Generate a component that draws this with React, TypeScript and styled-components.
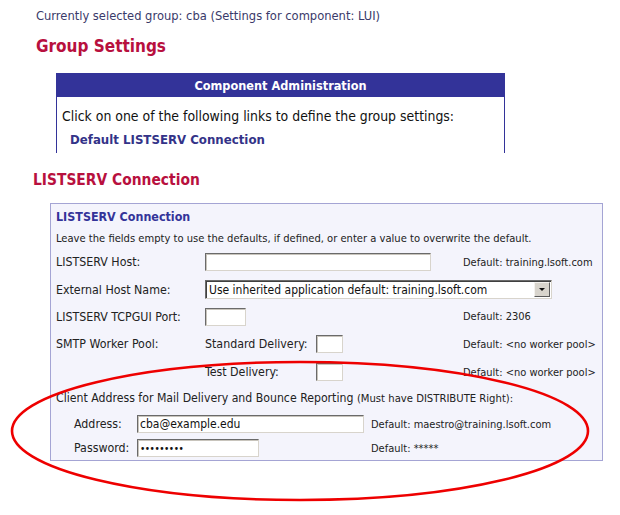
import React from "react";
import styled, { createGlobalStyle } from "styled-components";

const Global = createGlobalStyle`
  html, body { margin: 0; padding: 0; background: #fff; }
  body { font-family: "DejaVu Sans Condensed", "DejaVu Sans", Tahoma, sans-serif; color: #222; }
  * { box-sizing: border-box; }
`;

const Page = styled.div`
  position: relative;
  width: 620px;
  height: 515px;
  overflow: hidden;
  padding: 9px 0 0 33px;
`;

const Crumb = styled.div`
  font-size: 12.8px;
  line-height: 14px;
  color: #3a3a6a;
  padding-left: 3px;
`;

const Heading = styled.h1<{ $size: number }>`
  margin: 0;
  font-size: ${(p) => p.$size}px;
  font-weight: bold;
  color: #b8103e;
  line-height: 20px;
`;

const GroupHeading = styled(Heading)`
  margin: 13px 0 0 3px;
`;

const SectionHeading = styled(Heading)`
  margin: 17px 0 0 0;
`;

const AdminBox = styled.div`
  margin: 17px 0 0 23px;
  width: 449px;
  border: 1px solid #333399;
  border-bottom: none;
`;

const AdminHeader = styled.div`
  height: 23px;
  background: #333399;
  color: #fff;
  font-weight: bold;
  font-size: 12.6px;
  display: flex;
  align-items: center;
  justify-content: center;
`;

const AdminBody = styled.div`
  padding: 10px 0 4px 5px;
  display: flex;
  flex-direction: column;
  gap: 6px;
`;

const AdminText = styled.div`
  font-size: 13.9px;
  line-height: 18px;
  color: #111;
`;

const AdminLink = styled.a`
  font-size: 13.1px;
  line-height: 18px;
  font-weight: bold;
  color: #333388;
  text-decoration: none;
  padding-left: 8px;
`;

const Panel = styled.div`
  margin: 13px 0 0 17px;
  width: 553px;
  background: #f4f4fc;
  border: 1px solid #a4a4d4;
  padding: 0 0 2px 5px;
`;

const Row = styled.div<{ $h: number; $indent?: number }>`
  height: ${(p) => p.$h}px;
  display: flex;
  align-items: center;
  padding-left: ${(p) => p.$indent ?? 0}px;
  font-size: 12.3px;
  color: #222;
  white-space: nowrap;
`;

const PanelTitle = styled.div`
  font-size: 12.4px;
  font-weight: bold;
  color: #333399;
`;

const Note = styled.div`
  font-size: 11.1px;
  color: #222;
`;

const Cell = styled.div<{ $w: number }>`
  width: ${(p) => p.$w}px;
  flex: none;
  display: flex;
  align-items: center;
`;

const DefaultText = styled.div<{ $w: number }>`
  width: ${(p) => p.$w}px;
  flex: none;
  font-size: 11px;
`;

const ClientLine = styled.span`
  font-size: 12.2px;
`;

const Small = styled.span`
  font-size: 11.2px;
`;

const Input = styled.input<{ $w: number }>`
  width: ${(p) => p.$w}px;
  height: 18px;
  padding: 0 2px;
  margin: 0;
  font-family: "DejaVu Sans Condensed", "DejaVu Sans", sans-serif;
  font-size: 12px;
  color: #111;
  background: #fff;
  border-style: solid;
  border-width: 1px;
  border-color: #6a6a6a #d8d4cc #d8d4cc #6a6a6a;
  box-shadow: inset 1px 1px 0 #c8c4bc;
  outline: none;
  &[type="password"] {
    font-size: 10px;
    letter-spacing: -0.5px;
  }
`;

const Select = styled.div`
  width: 347px;
  height: 19px;
  display: flex;
  background: #fff;
  border-style: solid;
  border-width: 1px;
  border-color: #6a6a6a #d8d4cc #d8d4cc #6a6a6a;
  box-shadow: inset 1px 1px 0 #404040;
  font-size: 12px;
  color: #111;
`;

const SelectValue = styled.div`
  flex: 1;
  display: flex;
  align-items: center;
  padding-left: 3px;
`;

const SelectArrow = styled.div`
  width: 16px;
  margin: 1px;
  background: #d8d4cc;
  border-style: solid;
  border-width: 1px;
  border-color: #f4f2ee #5a5a5a #5a5a5a #f4f2ee;
  display: flex;
  align-items: center;
  justify-content: center;
  &::after {
    content: "";
    border-left: 3px solid transparent;
    border-right: 3px solid transparent;
    border-top: 3px solid #111;
  }
`;

const Ellipse = styled.svg`
  position: absolute;
  left: 0;
  top: 0;
  pointer-events: none;
`;

export default function App() {
  return (
    <>
      <Global />
      <Page>
        <Crumb>Currently selected group: cba (Settings for component: LUI)</Crumb>
        <GroupHeading $size={17}>Group Settings</GroupHeading>
        <AdminBox>
          <AdminHeader>Component Administration</AdminHeader>
          <AdminBody>
            <AdminText>Click on one of the following links to define the group settings:</AdminText>
            <AdminLink href="#">Default LISTSERV Connection</AdminLink>
          </AdminBody>
        </AdminBox>
        <SectionHeading $size={15.4}>LISTSERV Connection</SectionHeading>
        <Panel>
          <Row $h={24}>
            <PanelTitle>LISTSERV Connection</PanelTitle>
          </Row>
          <Row $h={20}>
            <Note>Leave the fields empty to use the defaults, if defined, or enter a value to overwrite the default.</Note>
          </Row>
          <Row $h={28}>
            <Cell $w={149}>LISTSERV Host:</Cell>
            <Cell $w={258}>
              <Input $w={226} defaultValue="" />
            </Cell>
            <DefaultText $w={140}>Default: training.lsoft.com</DefaultText>
          </Row>
          <Row $h={27}>
            <Cell $w={149}>External Host Name:</Cell>
            <Select>
              <SelectValue>Use inherited application default: training.lsoft.com</SelectValue>
              <SelectArrow />
            </Select>
          </Row>
          <Row $h={27}>
            <Cell $w={149}>LISTSERV TCPGUI Port:</Cell>
            <Cell $w={258}>
              <Input $w={41} defaultValue="" />
            </Cell>
            <DefaultText $w={140}>Default: 2306</DefaultText>
          </Row>
          <Row $h={28}>
            <Cell $w={149}>SMTP Worker Pool:</Cell>
            <Cell $w={111}>Standard Delivery:</Cell>
            <Cell $w={147}>
              <Input $w={27} defaultValue="" />
            </Cell>
            <DefaultText $w={140}>Default: &lt;no worker pool&gt;</DefaultText>
          </Row>
          <Row $h={28}>
            <Cell $w={149} />
            <Cell $w={111}>Test Delivery:</Cell>
            <Cell $w={147}>
              <Input $w={27} defaultValue="" />
            </Cell>
            <DefaultText $w={140}>Default: &lt;no worker pool&gt;</DefaultText>
          </Row>
          <Row $h={24}>
            <ClientLine>
              Client Address for Mail Delivery and Bounce Reporting <Small>(Must have DISTRIBUTE Right):</Small>
            </ClientLine>
          </Row>
          <Row $h={28} $indent={18}>
            <Cell $w={63}>Address:</Cell>
            <Cell $w={234}>
              <Input $w={227} defaultValue="cba@example.edu" />
            </Cell>
            <DefaultText $w={200}>Default: maestro@training.lsoft.com</DefaultText>
          </Row>
          <Row $h={20} $indent={18}>
            <Cell $w={63}>Password:</Cell>
            <Cell $w={234}>
              <Input $w={122} type="password" defaultValue="abcdefgh1" />
            </Cell>
            <DefaultText $w={200}>Default: *****</DefaultText>
          </Row>
        </Panel>
        <Ellipse width="620" height="515" viewBox="0 0 620 515">
          <ellipse cx="300" cy="431" rx="288" ry="69" fill="none" stroke="#ee0000" strokeWidth="2.6" />
        </Ellipse>
      </Page>
    </>
  );
}
